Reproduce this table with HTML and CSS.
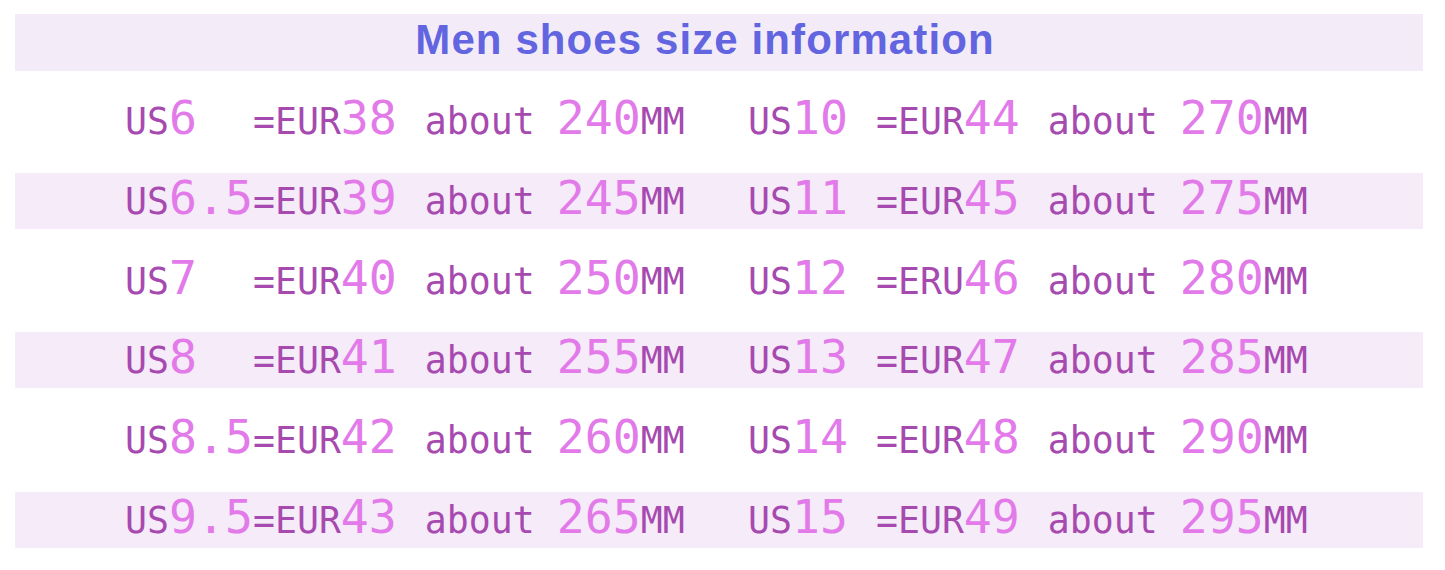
FILE: index.html
```html
<!DOCTYPE html>
<html lang="en">
<head>
<meta charset="utf-8">
<title>Men shoes size information</title>
<link rel="stylesheet" href="styles.css">
</head>
<body>
<div class="sheet">
  <div class="header"><h1 class="title">Men shoes size information</h1></div>
  <div class="rows">
    <div class="row">
      <div class="cell"><span class="s">US</span><span class="n">6  </span><span class="s">=EUR</span><span class="n">38 </span><span class="s">about </span><span class="n">240</span><span class="s">MM</span></div>
      <div class="cell"><span class="s">US</span><span class="n">10 </span><span class="s">=EUR</span><span class="n">44 </span><span class="s">about </span><span class="n">270</span><span class="s">MM</span></div>
    </div>
    <div class="row band">
      <div class="cell"><span class="s">US</span><span class="n">6.5</span><span class="s">=EUR</span><span class="n">39 </span><span class="s">about </span><span class="n">245</span><span class="s">MM</span></div>
      <div class="cell"><span class="s">US</span><span class="n">11 </span><span class="s">=EUR</span><span class="n">45 </span><span class="s">about </span><span class="n">275</span><span class="s">MM</span></div>
    </div>
    <div class="row">
      <div class="cell"><span class="s">US</span><span class="n">7  </span><span class="s">=EUR</span><span class="n">40 </span><span class="s">about </span><span class="n">250</span><span class="s">MM</span></div>
      <div class="cell"><span class="s">US</span><span class="n">12 </span><span class="s">=ERU</span><span class="n">46 </span><span class="s">about </span><span class="n">280</span><span class="s">MM</span></div>
    </div>
    <div class="row band">
      <div class="cell"><span class="s">US</span><span class="n">8  </span><span class="s">=EUR</span><span class="n">41 </span><span class="s">about </span><span class="n">255</span><span class="s">MM</span></div>
      <div class="cell"><span class="s">US</span><span class="n">13 </span><span class="s">=EUR</span><span class="n">47 </span><span class="s">about </span><span class="n">285</span><span class="s">MM</span></div>
    </div>
    <div class="row">
      <div class="cell"><span class="s">US</span><span class="n">8.5</span><span class="s">=EUR</span><span class="n">42 </span><span class="s">about </span><span class="n">260</span><span class="s">MM</span></div>
      <div class="cell"><span class="s">US</span><span class="n">14 </span><span class="s">=EUR</span><span class="n">48 </span><span class="s">about </span><span class="n">290</span><span class="s">MM</span></div>
    </div>
    <div class="row band">
      <div class="cell"><span class="s">US</span><span class="n">9.5</span><span class="s">=EUR</span><span class="n">43 </span><span class="s">about </span><span class="n">265</span><span class="s">MM</span></div>
      <div class="cell"><span class="s">US</span><span class="n">15 </span><span class="s">=EUR</span><span class="n">49 </span><span class="s">about </span><span class="n">295</span><span class="s">MM</span></div>
    </div>
  </div>
</div>
</body>
</html>
```
FILE: styles.css
```css
html, body {
  margin: 0;
  padding: 0;
  background: #ffffff;
}

.sheet {
  width: 1408px;
  padding: 14px 0 0 15px;
}

.header {
  height: 57px;
  background: #f3ecf8;
  display: flex;
  align-items: center;
  justify-content: center;
}

.title {
  margin: 0;
  font-family: "Liberation Sans", Arial, sans-serif;
  font-weight: bold;
  font-size: 42px;
  letter-spacing: 1.1px;
  line-height: 1;
  color: #6265df;
  padding: 0 28px 6px 0;
}

.rows {
  display: grid;
  grid-auto-rows: 56px;
  row-gap: 23.75px;
  margin-top: 22px;
}

.row {
  display: grid;
  grid-template-columns: 623px 1fr;
  align-items: center;
  padding-left: 110px;
}

.band {
  background: #f6ebf8;
}

.cell {
  font-family: "DejaVu Sans Mono", monospace;
  white-space: pre;
  line-height: 50px;
  padding-bottom: 6px;
}

.s {
  font-size: 36.5px;
  color: #a64ab0;
}

.n {
  font-size: 46.5px;
  color: #e27ae9;
}
```
